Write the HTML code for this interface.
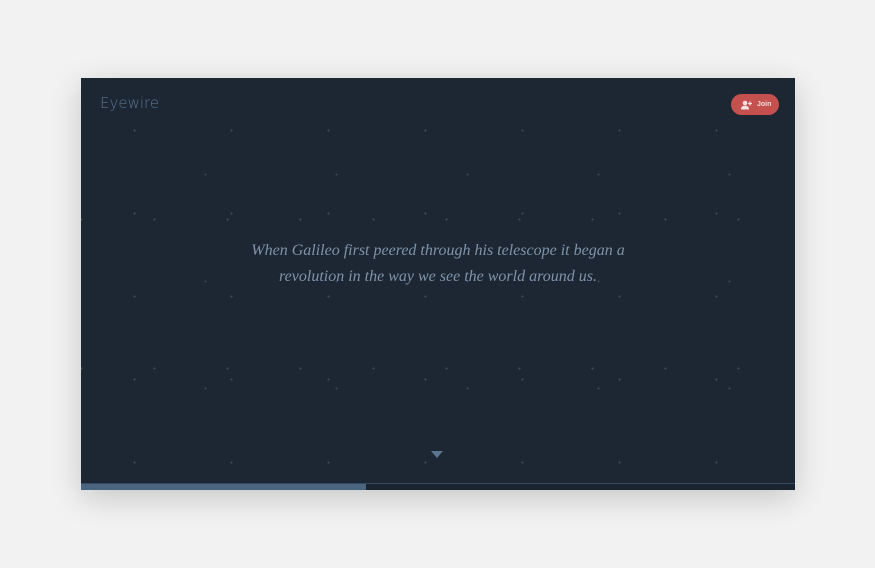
<!DOCTYPE html>
<html><head><meta charset="utf-8"><style>
html,body{margin:0;padding:0;width:875px;height:568px;background:#f2f2f2;overflow:hidden}
.panel{position:absolute;left:81px;top:78px;width:714px;height:412px;background:#1c2733;box-shadow:0 8px 30px rgba(0,0,0,.18);overflow:hidden;
background-image:
radial-gradient(circle,#3d4f61 0.8px,transparent 1.2px),
radial-gradient(circle,#38495a 0.8px,transparent 1.2px),
radial-gradient(circle,#3d4f61 0.8px,transparent 1.2px);
background-size:97px 83px,131px 107px,73px 149px;
background-position:5px 11px,59px 43px,37px 67px}
.logo{position:absolute;left:19px;top:16px;font-family:"DejaVu Sans","Liberation Sans",sans-serif;font-size:15px;color:#5a7690;letter-spacing:0;font-weight:300}
.join{position:absolute;left:650px;top:16px;width:48px;height:21px;border-radius:11px;background:#c5514f;color:#f4dede;font:bold 7px "Liberation Sans",sans-serif;}
.join span{position:absolute;left:26px;top:7px}
.quote{position:absolute;left:0;width:714px;top:160px;text-align:center;font:italic 16px/26px "Liberation Serif",serif;color:#8093a8}
.tri{position:absolute;left:350px;top:373px;width:0;height:0;border-left:6px solid transparent;border-right:6px solid transparent;border-top:7px solid #5a7690}
.bar{position:absolute;left:0;top:405px;width:714px;height:7px;background:#1a2430;border-top:1px solid #34495c}
.prog{position:absolute;left:0;top:0;width:285px;height:7px;background:#4a6580}
</style></head><body>
<div class="panel">
<div class="logo">Eyewire</div>
<div class="join"><svg style="position:absolute;left:10px;top:6px" width="11" height="10" viewBox="0 0 11 10"><circle cx="4" cy="3" r="2.3" fill="#f4dede"/><path d="M0 9.5C0 6.5 1.8 5.8 4 5.8S8 6.5 8 9.5Z" fill="#f4dede"/><path d="M9 1.5v4M7 3.5h4" stroke="#f4dede" stroke-width="1.2"/></svg><span>Join</span></div>
<div class="quote">When Galileo first peered through his telescope it began a<br>revolution in the way we see the world around us.</div>
<div class="tri"></div>
<div class="bar"><div class="prog"></div></div>
</div>
</body></html>
